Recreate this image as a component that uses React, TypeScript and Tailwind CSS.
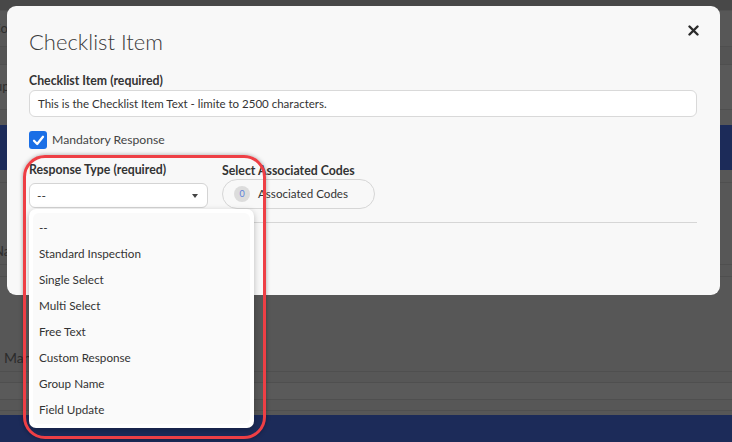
import React from "react";

const items = [
  "--",
  "Standard Inspection",
  "Single Select",
  "Multi Select",
  "Free Text",
  "Custom Response",
  "Group Name",
  "Field Update",
];

export default function App() {
  return (
    <div
      className="relative w-[732px] h-[442px] overflow-hidden bg-[#575757] text-[#333]"
      style={{ fontFamily: "Lato, 'Open Sans', sans-serif" }}
    >
      {/* dimmed page behind */}
      <div className="flex flex-col w-full h-full">
        <div className="h-[11px] bg-[#484848] border-b border-[#515151]" />
        <div className="h-[36px] flex items-center border-b border-[#4f4f4f] text-[13px] text-[#2e2e2e]">
          <span className="-ml-[8px]">Co</span>
        </div>
        <div className="h-[18px] border-b border-[#4f4f4f] bg-[#545454]" />
        <div className="h-[45px] flex items-center border-b border-[#4f4f4f] bg-[#595959] text-[13px] text-[#2e2e2e]">
          <span className="-ml-[12px]">Sup</span>
        </div>
        <div className="h-[15px]" />
        <div className="h-[45px] bg-[#1c2b59]" />
        <div className="h-[13px] border-b border-[#4f4f4f]" />
        <div className="h-[56px]" />
        <div className="h-[26px] flex items-center text-[13px] text-[#2e2e2e] border-b border-[#4f4f4f]">
          <span className="-ml-[6px]">Na</span>
        </div>
        <div className="h-[12px] border-b border-[#4f4f4f]" />
        <div className="h-[67px]" />
        <div className="h-[28px] flex items-center text-[14px] text-[#2b2b2b] border-b border-[#4f4f4f]">
          <span className="ml-[4px]">Mandatory</span>
        </div>
        <div className="h-[11px] border-b border-[#4f4f4f]" />
        <div className="h-[17px] border-b border-[#4f4f4f] bg-[#5a5a5a]" />
        <div className="h-[11px] border-b border-[#4f4f4f]" />
        <div className="h-[4px]" />
        <div className="flex-1 bg-[#1c2b59]" />
      </div>

      {/* modal */}
      <div className="absolute left-[7px] top-[6px] w-[713px] h-[289px] rounded-[9px] bg-[#f8f8f8] px-[22px] pt-[18px]">
        <div className="flex items-start justify-between">
          <h2 className="mt-[4px] text-[22px] leading-[28px] font-light text-[#3a3a3a]">Checklist Item</h2>
          <svg width="11" height="11" viewBox="0 0 11 11" className="mt-[1px] mr-[-1px]">
            <path d="M1.5 1.5 L9.5 9.5 M9.5 1.5 L1.5 9.5" stroke="#2a2a2a" strokeWidth="2.4" strokeLinecap="round" />
          </svg>
        </div>

        <div className="mt-[17px] text-[12.3px] leading-[16px] font-bold text-[#333]">Checklist Item (required)</div>
        <div className="mt-[1px] h-[27px] w-[668px] rounded-[6px] border border-[#d9d9d9] bg-white flex items-center px-[8px] text-[11.5px] text-[#333]">
          This is the Checklist Item Text - limite to 2500 characters.
        </div>

        <div className="mt-[14px] flex items-center gap-[5px] h-[18px]">
          <div className="w-[18px] h-[18px] rounded-[3px] bg-[#1a6fe6] flex items-center justify-center">
            <svg width="13" height="13" viewBox="0 0 13 13">
              <path d="M2 6.8 L5.2 10 L11 2.8" stroke="white" strokeWidth="2.3" fill="none" strokeLinecap="round" strokeLinejoin="round" />
            </svg>
          </div>
          <span className="text-[12.2px] leading-[18px] text-[#444]">Mandatory Response</span>
        </div>

        <div className="mt-[13px] flex gap-[14px]">
          <div className="w-[179px]">
            <div className="text-[12.3px] leading-[16px] font-bold text-[#333]">Response Type (required)</div>
            <div className="mt-[5px] h-[25px] rounded-[6px] border border-[#d4d4d4] bg-white flex items-center justify-between px-[7px]">
              <span className="text-[12px] text-[#333]">--</span>
              <span className="w-0 h-0 border-l-[3.5px] border-r-[3.5px] border-t-[4px] border-l-transparent border-r-transparent border-t-[#444] mr-[2px]" />
            </div>
          </div>
          <div>
            <div className="text-[12.3px] leading-[16px] font-bold text-[#333] mt-[1px]">Select Associated Codes</div>
            <div className="h-[30px] w-[153px] rounded-full border border-[#d6d6d6] flex items-center pl-[11px] gap-[8px]">
              <span className="w-[16px] h-[16px] rounded-full bg-[#dcdcdc] flex items-center justify-center text-[9px] text-[#5b7fd9]">0</span>
              <span className="text-[11.6px] text-[#333]">Associated Codes</span>
            </div>
          </div>
        </div>

        <div className="mt-[13px] h-px w-[668px] bg-[#d6d6d6]" />
      </div>

      {/* dropdown */}
      <div className="absolute left-[29px] top-[209px] w-[225px] h-[219px] rounded-[7px] bg-white shadow-[0_2px_6px_rgba(0,0,0,0.25)] p-[4px]">
        <div className="h-full rounded-[6px] bg-[#fafafa] pt-[2px]">
          {items.map((t) => (
            <div key={t} className="h-[26px] flex items-center pl-[6px] text-[11.7px] text-[#333]">
              {t}
            </div>
          ))}
        </div>
      </div>

      {/* red annotation */}
      <div className="absolute left-[23px] top-[155px] w-[243px] h-[284px] rounded-[22px] border-[3px] border-[#ee3f45] shadow-[0_0_4px_rgba(0,0,0,0.35)]" />
    </div>
  );
}
